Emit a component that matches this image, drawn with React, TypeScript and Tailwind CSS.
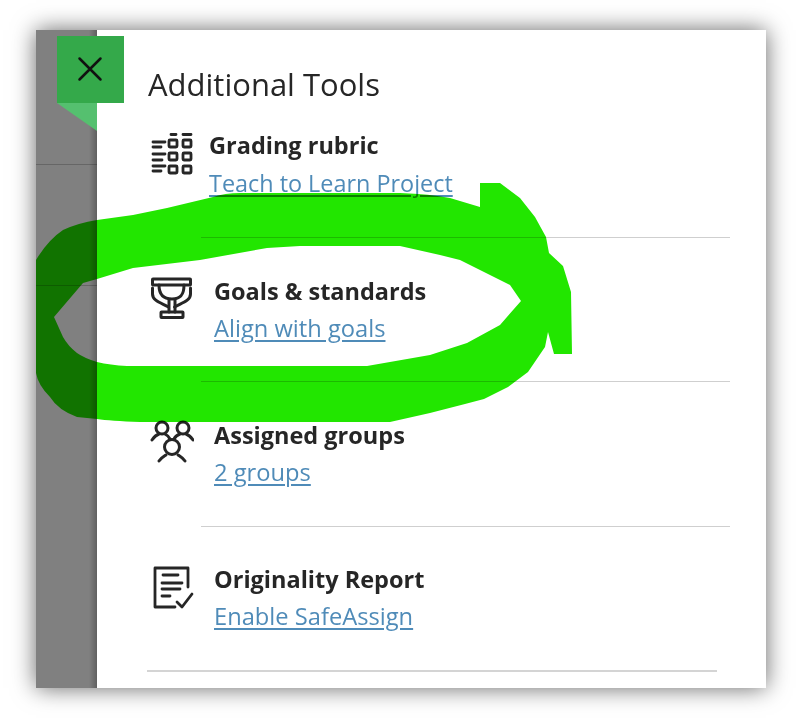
import React from "react";

const sw = "stroke-[#262626]";

function RubricIcon() {
  const squares: [number, number][] = [];
  for (const y of [8, 21, 34]) for (const x of [19, 33]) squares.push([x, y]);
  return (
    <svg width="44" height="44" viewBox="0 0 44 44" fill="none" className={sw} strokeWidth="2.8" strokeLinecap="round">
      <path d="M21 2.500h5M33 2.500h8" />
      {squares.map(([x, y]) => (
        <rect key={`${x}-${y}`} x={x} y={y} width="8" height="7" rx="1" />
      ))}
      <path d="M3 10h12M3 15h8M3 22h12M3 28h9M3 34h12M3 39h8" />
    </svg>
  );
}

function TrophyIcon() {
  return (
    <svg width="44" height="44" viewBox="0 0 44 44" fill="none" className={sw} strokeWidth="3" strokeLinejoin="round" strokeLinecap="round">
      <rect x="2.500" y="2" width="38" height="6" rx="0.5" />
      <path d="M9 8c0 9 4 14 13 14s12-5 12-14" />
      <path d="M2.500 11v6c0 7 9 9 16 13M40.500 11v6c0 7-9 9-16 13" />
      <path d="M19 23v12M25 23v12" />
      <rect x="11" y="35" width="22" height="5.500" rx="0.5" />
    </svg>
  );
}

function GroupIcon() {
  return (
    <svg width="44" height="44" viewBox="0 0 44 44" fill="none" className={sw} strokeWidth="3" strokeLinecap="round">
      <circle cx="12" cy="8" r="6" />
      <circle cx="33" cy="8" r="6" />
      <circle cx="22" cy="27" r="7.500" />
      <path d="M2 20c2-3 4-5 7-6M15 14c2 1 4 3 5 5M24 19c1-2 3-4 6-5M36 14c3 1 5 3 7 6M9 41c2-3 4-4 7-6M28 35c3 2 5 3 7 6" />
    </svg>
  );
}

function ReportIcon() {
  return (
    <svg width="44" height="44" viewBox="0 0 44 44" fill="none" className={sw} strokeWidth="2.800" strokeLinecap="round" strokeLinejoin="round">
      <path d="M38 22V3H5v39h20" />
      <path d="M13 10h15M12 18h20M12 24h18M12 31h8" />
      <path d="M27 37l5 5 10-13" />
    </svg>
  );
}

const rows = [
  { icon: <TrophyIcon />, title: "Goals & standards", link: "Align with goals", h: "h-[144px]", iconTop: "pt-[40px]", top: "pt-[37px]" },
  { icon: <GroupIcon />, title: "Assigned groups", link: "2 groups", h: "h-[145px]", iconTop: "pt-[39px]", top: "pt-[37px]" },
  { icon: <ReportIcon />, title: "Originality Report", link: "Enable SafeAssign", h: "h-[144px]", iconTop: "pt-[39px]", top: "pt-[36px]" },
];

export default function App() {
  return (
    <div className="relative h-[718px] w-[796px] overflow-hidden bg-white pl-[36px] pt-[30px] font-['Open_Sans',sans-serif] text-[#262626]">
      <div className="relative flex h-[658px] w-[730px] shadow-[0_0_22px_rgba(0,0,0,0.6)]">
        <div className="w-[61px] shrink-0 bg-[#808080]">
          <div className="h-[135px] border-b border-[#666666]" />
          <div className="h-[121px] border-b border-[#666666]" />
        </div>

        <main className="flex min-w-0 flex-1 flex-col bg-white pl-[50px] pr-[36px] blur-[0.5px]">
          <h1 className="pl-[1px] pt-[34px] text-[31px] leading-[40px]">Additional Tools</h1>

          <section className="mt-[23px] flex h-[110px] flex-col">
            <div className="flex">
              <div className="w-[62px] shrink-0 pl-[3px] pt-[5px]"><RubricIcon /></div>
              <div>
                <div className="pt-[2px] text-[23.500px] font-bold leading-[32px]">Grading rubric</div>
                <a className="block pt-[6px] text-[23.400px] leading-[32px] text-[#4f8bb8] underline underline-offset-[3px]">Teach to Learn Project</a>
              </div>
            </div>
          </section>

          {rows.map((r) => (
            <section key={r.title} className={`flex ${r.h}`}>
              <div className={`w-[54px] shrink-0 pl-[3px] ${r.iconTop}`}>{r.icon}</div>
              <div className={`flex-1 border-t border-[#cfcfcf] pl-[13px] ${r.top}`}>
                <div className="text-[23.500px] font-bold leading-[32px]">{r.title}</div>
                <a className="block pt-[5px] text-[23.700px] leading-[32px] text-[#4f8bb8] underline underline-offset-[3px]">{r.link}</a>
              </div>
            </section>
          ))}
          <div className="mr-[13px] border-t-2 border-[#d4d4d4]" />
        </main>

        <div className="pointer-events-none absolute left-[61px] top-0 h-full w-[8px] -translate-x-[8px] bg-gradient-to-r from-transparent to-black/25" />

        <button className="absolute left-[21px] top-[6px] flex h-[67px] w-[67px] items-center justify-center bg-[#34a94a] pb-[2px] pr-[2px]">
          <svg width="28" height="28" viewBox="0 0 28 28" fill="none" stroke="#111" strokeWidth="2.500" strokeLinecap="round">
            <path d="M3.500 3.500l21 21M24.500 3.500l-21 21" />
          </svg>
        </button>
        <svg className="absolute left-[21px] top-[73px]" width="40" height="28" viewBox="0 0 40 28">
          <path d="M0 0h40v28z" fill="#55c06f" />
        </svg>
      </div>

      <svg className="absolute left-0 top-0 mix-blend-multiply" width="796" height="718" viewBox="0 0 796 718">
        <path
          fillRule="evenodd"
          fill="#22e600"
          d="M36 260 Q48 240 63 230 Q78 223 97 220 L133 215 L167 208 L213 197 Q225 193 240 193 L400 193 Q430 194 450 198 L480 207 L480 183 L500 183 L520 198 L535 217 L546 237 L549 253 L563 266 L571 292 L572 354 L554 354 L548 332 L545 347 L528 372 L508 387 L484 399 L465 404 L430 413 L390 422 L140 422 Q110 421 97 419 L77 417 Q58 410 50 397 Q38 385 36 373 Z M54 317 L83 283 L97 279 L133 268 L200 260 L267 248 L300 246 L400 246 L440 255 L460 260 L490 275 L510 285 L521 301 L500 325 L467 343 L430 355 L367 366 L127 366 Q110 365 97 362 Q84 358 77 353 Q68 346 63 337 Z"
        />
      </svg>
    </div>
  );
}
